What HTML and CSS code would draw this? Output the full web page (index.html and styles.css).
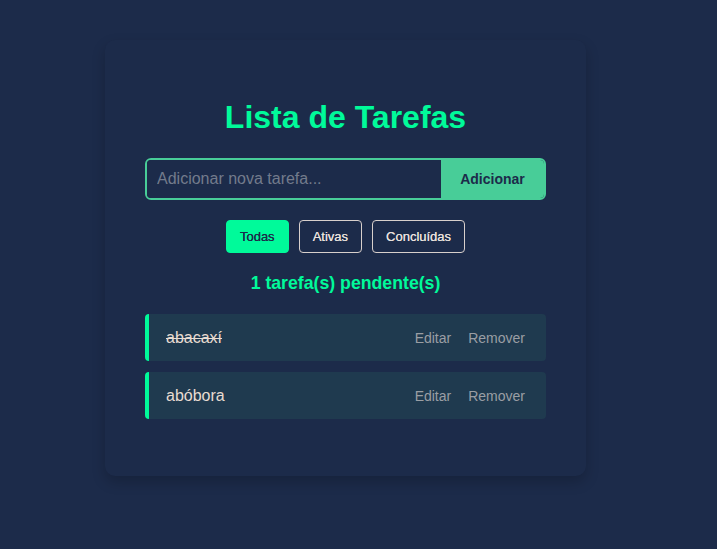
FILE: index.html
```html
<!DOCTYPE html>
<html lang="pt-BR">
<head>
<meta charset="utf-8">
<title>Lista de Tarefas</title>
<link rel="stylesheet" href="styles.css">
</head>
<body>
<main class="card">
  <h1 class="title">Lista de Tarefas</h1>
  <form class="add-form">
    <input class="add-input" type="text" placeholder="Adicionar nova tarefa...">
    <button class="add-btn" type="button">Adicionar</button>
  </form>
  <div class="filters">
    <button class="filter active" type="button">Todas</button>
    <button class="filter" type="button">Ativas</button>
    <button class="filter" type="button">Concluídas</button>
  </div>
  <p class="pending">1 tarefa(s) pendente(s)</p>
  <ul class="tasks">
    <li class="task done">
      <span class="task-text">abacaxí</span>
      <div class="task-actions">
        <button class="action" type="button">Editar</button>
        <button class="action" type="button">Remover</button>
      </div>
    </li>
    <li class="task">
      <span class="task-text">abóbora</span>
      <div class="task-actions">
        <button class="action" type="button">Editar</button>
        <button class="action" type="button">Remover</button>
      </div>
    </li>
  </ul>
</main>
</body>
</html>
```
FILE: styles.css
```css
* { box-sizing: border-box; }
html, body {
  margin: 0;
  background: #1c2b4a;
  font-family: "Liberation Sans", Arial, sans-serif;
}
body { padding: 40px 0 60px; }
.card {
  width: 481px;
  margin: 0 auto 0 105px;
  padding: 40px 40px 57px 40px;
  background: #1c2b4a;
  border-radius: 10px;
  box-shadow: 0 6px 14px rgba(0, 0, 0, 0.2);
}
.title {
  margin: 19px 0 22px;
  text-align: center;
  font-size: 32px;
  line-height: 37px;
  font-weight: bold;
  color: #00fa9a;
}
.add-form {
  display: flex;
  height: 42px;
  border: 2px solid #48cd98;
  border-radius: 6px;
  overflow: hidden;
}
.add-input {
  flex: 1;
  min-width: 0;
  border: 0;
  outline: 0;
  background: #1c2b4a;
  padding: 0 10px;
  font-family: inherit;
  font-size: 16px;
  color: #e8e0d8;
}
.add-input::placeholder { color: #737b8c; }
.add-btn {
  width: 103px;
  border: 0;
  background: #48cd98;
  color: #1c2b4a;
  font-family: inherit;
  font-size: 14px;
  font-weight: bold;
  padding: 0;
}
.filters {
  display: flex;
  justify-content: center;
  gap: 10px;
  margin-top: 20px;
}
.filter {
  height: 33px;
  padding: 0 13px;
  border: 1px solid #d8d0cc;
  border-radius: 4px;
  background: transparent;
  color: #e8e0dc;
  font-family: inherit;
  font-size: 13px;
  text-shadow: 0 0 0.3px currentColor;
}
.filter.active {
  background: #00fa9a;
  border-color: #00fa9a;
  color: #1c2b4a;
}
.pending {
  margin: 20px 0 20px;
  text-align: center;
  font-size: 17.7px;
  line-height: 21px;
  font-weight: bold;
  color: #00fa9a;
}
.tasks {
  list-style: none;
  margin: 0;
  padding: 0;
}
.task {
  display: flex;
  align-items: center;
  justify-content: space-between;
  height: 47px;
  margin-bottom: 11px;
  padding: 0 21px 0 17px;
  background: #1f3a4f;
  border-left: 4px solid #00fa9a;
  border-radius: 4px;
}
.task:last-child { margin-bottom: 0; }
.task-text {
  font-size: 16px;
  color: #e8dcd2;
}
.task.done .task-text { text-decoration: line-through; }
.task-actions {
  display: flex;
  gap: 17px;
}
.action {
  border: 0;
  padding: 0;
  background: transparent;
  color: #9a9ea4;
  font-family: inherit;
  font-size: 14px;
}
```
